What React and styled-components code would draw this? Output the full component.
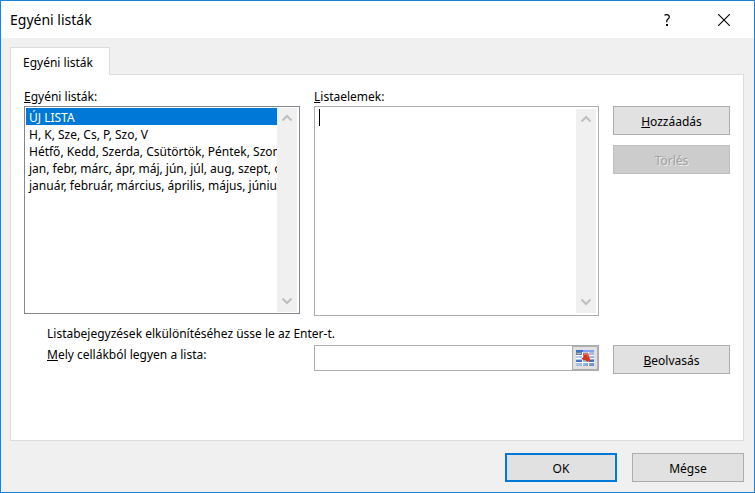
import styled, { createGlobalStyle } from "styled-components";

const GlobalStyle = createGlobalStyle`
  * {
    box-sizing: border-box;
  }

  body {
    margin: 0;
    background: #f0f0f0;
  }

  body, button, input, select, textarea {
    font-family: "Noto Sans", "Open Sans", sans-serif;
    font-size: 12px;
    line-height: 17px;
    color: #000;
  }
`;

const Dialog = styled.div`
  display: flex;
  flex-direction: column;
  min-height: 100vh;
  border: 1px solid #1883d7;
  background: #f0f0f0;
`;

const TitleBar = styled.header`
  display: flex;
  align-items: center;
  height: 37px;
  padding: 0 7px 0 9px;
  background: #fff;
`;

const Title = styled.h1`
  flex: 1;
  margin: 0;
  font-size: 14px;
  font-weight: 400;
`;

const TitleButton = styled.button`
  display: flex;
  align-items: center;
  justify-content: center;
  width: ${(props) => props.$width};
  height: 36px;
  padding: 0;
  border: 0;
  background: none;
`;

const Body = styled.main`
  flex: 1;
  display: flex;
  flex-direction: column;
  padding: 9px 10px 10px 9px;
`;

const Tab = styled.button`
  align-self: flex-start;
  z-index: 1;
  height: 28px;
  margin-bottom: -1px;
  padding: 2px 16px 0 12px;
  border: 1px solid #dcdcdc;
  border-bottom: 0;
  background: #fff;
`;

const Panel = styled.section`
  flex: 1;
  padding: 13px;
  border: 1px solid #dcdcdc;
  background: #fff;
`;

const Columns = styled.div`
  display: grid;
  grid-template-columns: minmax(0, 276fr) minmax(0, 285fr) 117px;
  column-gap: 14px;
  align-items: start;
`;

const Label = styled.label`
  display: block;
  height: 18px;
`;

const ListFrame = styled.div`
  display: flex;
  height: 208px;
  padding: 1px;
  border: 1px solid #828790;
  background: #fff;
`;

const ListBox = styled.select`
  flex: 1;
  min-width: 0;
  padding: 0;
  border: 0;
  border-radius: 0;
  outline: 0;
  background: #fff;
  overflow: hidden;

  option {
    height: 17px;
    min-height: 17px;
    padding: 1px 0 0 3px;
    line-height: 17px;
    overflow: hidden;
    text-overflow: clip;
  }

  option:checked {
    background: linear-gradient(#0078d7, #0078d7);
    -webkit-text-fill-color: #fff;
  }
`;

const EntriesFrame = styled.div`
  position: relative;
  display: flex;
  height: 210px;
  padding: 2px;
  border: 1px solid #abadb3;
  background: #fff;
`;

const Entries = styled.textarea`
  flex: 1;
  min-width: 0;
  padding: 0 2px;
  border: 0;
  outline: 0;
  resize: none;
  overflow: hidden;
  caret-color: transparent;
`;

const Caret = styled.span`
  position: absolute;
  top: 2px;
  left: 4px;
  width: 1px;
  height: 17px;
  background: #000;
`;

const ScrollTrack = styled.div`
  display: flex;
  flex-direction: column;
  justify-content: space-between;
  align-items: center;
  width: 20px;
  padding: 5px 0;
  margin-right: ${(props) => props.$gap};
  background: #f0f0f0;
`;

const Actions = styled.div`
  display: grid;
  gap: 10px;
  padding-top: 18px;
`;

const Button = styled.button`
  width: 100%;
  height: 29px;
  padding: 2px 0 0;
  border: ${(props) => (props.$primary ? "2px solid #0078d7" : "1px solid #adadad")};
  background: #e1e1e1;

  &:disabled {
    border-color: #bfbfbf;
    background: #ccc;
    color: #a0a0a0;
    text-shadow: 1px 1px 0 rgba(255, 255, 255, 0.6);
  }
`;

const Hint = styled.p`
  margin: 0;
  padding: 9px 23px 3px;
`;

const ImportLabel = styled.label`
  padding: 1px 0 0 23px;
`;

const RangeField = styled.div`
  display: flex;
  height: 26px;
  border: 1px solid #abadb3;
  background: #fff;
`;

const RangeInput = styled.input`
  flex: 1;
  min-width: 0;
  padding: 0 4px;
  border: 0;
  outline: 0;
`;

const PickerButton = styled.button`
  display: flex;
  align-items: center;
  justify-content: center;
  width: 26px;
  padding: 0;
  border: 1px solid #adadad;
  background: #e1e1e1;
`;

const Footer = styled.footer`
  display: grid;
  grid-template-columns: 112px 112px;
  justify-content: end;
  gap: 15px;
  padding-top: 12px;
`;

const lists = [
  "ÚJ LISTA",
  "H, K, Sze, Cs, P, Szo, V",
  "Hétfő, Kedd, Szerda, Csütörtök, Péntek, Szombat, Vasárnap",
  "jan, febr, márc, ápr, máj, jún, júl, aug, szept, okt, nov, dec",
  "január, február, március, április, május, június, július, augusztus",
];

function Arrow({ down }) {
  return (
    <svg width="10" height="10" viewBox="0 0 10 10" aria-hidden="true">
      <path
        d={down ? "M0.5 1.5L5 6L9.5 1.5" : "M0.5 7.5L5 3L9.5 7.5"}
        fill="none"
        stroke="#bfbfbf"
        strokeWidth="2"
      />
    </svg>
  );
}

function ScrollBar({ gap }) {
  return (
    <ScrollTrack $gap={gap} aria-hidden="true">
      <Arrow />
      <Arrow down />
    </ScrollTrack>
  );
}

function RangeIcon() {
  return (
    <svg width="18" height="16" viewBox="0 0 18 16" aria-hidden="true">
      <defs>
        <linearGradient id="cells" x1="0" y1="0" x2="1" y2="1">
          <stop offset="0" stopColor="#c3d3ee" />
          <stop offset="0.6" stopColor="#a4bde6" />
          <stop offset="1" stopColor="#5f88ce" />
        </linearGradient>
      </defs>
      <rect width="18" height="16" fill="url(#cells)" />
      <path d="M0 5.5H18M0 8.5H18M0 12.5H18M6.5 2V16M12.5 2V16" stroke="#fff" />
      <rect width="7" height="2" fill="#3f6fd0" />
      <rect x="7" width="11" height="2" fill="#7fa5e8" />
      <rect y="2" width="6" height="3" fill="#6b7fa6" />
      <rect x="1" y="3" width="4" height="1" fill="#a9bad6" />
      <path d="M0 10h6v2H0zM13 10h5v2h-5z" fill="#4672c4" />
      <path d="M7 3.5L12.5 3.5L13 7L14 9L13.5 11.5L11 11.5L9 10L7.5 10.5L5.5 8.5L7.5 7Z" fill="#d6341d" />
      <path d="M8 4.5L11.5 4.5L12 7" fill="none" stroke="#ee6a4e" />
    </svg>
  );
}

function App() {
  return (
    <>
      <GlobalStyle />
      <Dialog role="dialog" aria-labelledby="title">
        <TitleBar>
          <Title id="title">Egyéni listák</Title>
          <TitleButton $width="68px" aria-label="Súgó">
            <svg width="6" height="12" viewBox="0 0 6 12">
              <path
                d="M0.5 1.2C1.2 0.7 2 0.6 2.7 0.6C4.3 0.6 5.3 1.5 5.3 2.9C5.3 4.9 2.7 5.1 2.7 7.2V8.2"
                fill="none"
                stroke="#000"
                strokeWidth="1.2"
              />
              <rect x="2" y="10" width="2" height="2" fill="#000" />
            </svg>
          </TitleButton>
          <TitleButton $width="46px" aria-label="Bezárás">
            <svg width="12" height="12" viewBox="0 0 12 12">
              <path d="M0 0L12 12M12 0L0 12" stroke="#000" strokeWidth="1.1" />
            </svg>
          </TitleButton>
        </TitleBar>
        <Body>
          <Tab role="tab" aria-selected="true">
            Egyéni listák
          </Tab>
          <Panel>
            <Columns>
              <div>
                <Label htmlFor="lists">
                  <u>E</u>gyéni listák:
                </Label>
                <ListFrame>
                  <ListBox id="lists" size={12} defaultValue={lists[0]}>
                    {lists.map((list) => (
                      <option key={list} value={list}>
                        {list}
                      </option>
                    ))}
                  </ListBox>
                  <ScrollBar gap="1px" />
                </ListFrame>
              </div>
              <div>
                <Label htmlFor="entries">
                  <u>L</u>istaelemek:
                </Label>
                <EntriesFrame>
                  <Entries id="entries" />
                  <Caret />
                  <ScrollBar gap="0" />
                </EntriesFrame>
              </div>
              <Actions>
                <Button>
                  <u>H</u>ozzáadás
                </Button>
                <Button disabled>Törlés</Button>
              </Actions>
            </Columns>
            <Hint>Listabejegyzések elkülönítéséhez üsse le az Enter-t.</Hint>
            <Columns>
              <ImportLabel htmlFor="range">
                <u>M</u>ely cellákból legyen a lista:
              </ImportLabel>
              <RangeField>
                <RangeInput id="range" type="text" />
                <PickerButton aria-label="Tartomány kijelölése">
                  <RangeIcon />
                </PickerButton>
              </RangeField>
              <Button>
                <u>B</u>eolvasás
              </Button>
            </Columns>
          </Panel>
          <Footer>
            <Button $primary>OK</Button>
            <Button>Mégse</Button>
          </Footer>
        </Body>
      </Dialog>
    </>
  );
}

export default App;
